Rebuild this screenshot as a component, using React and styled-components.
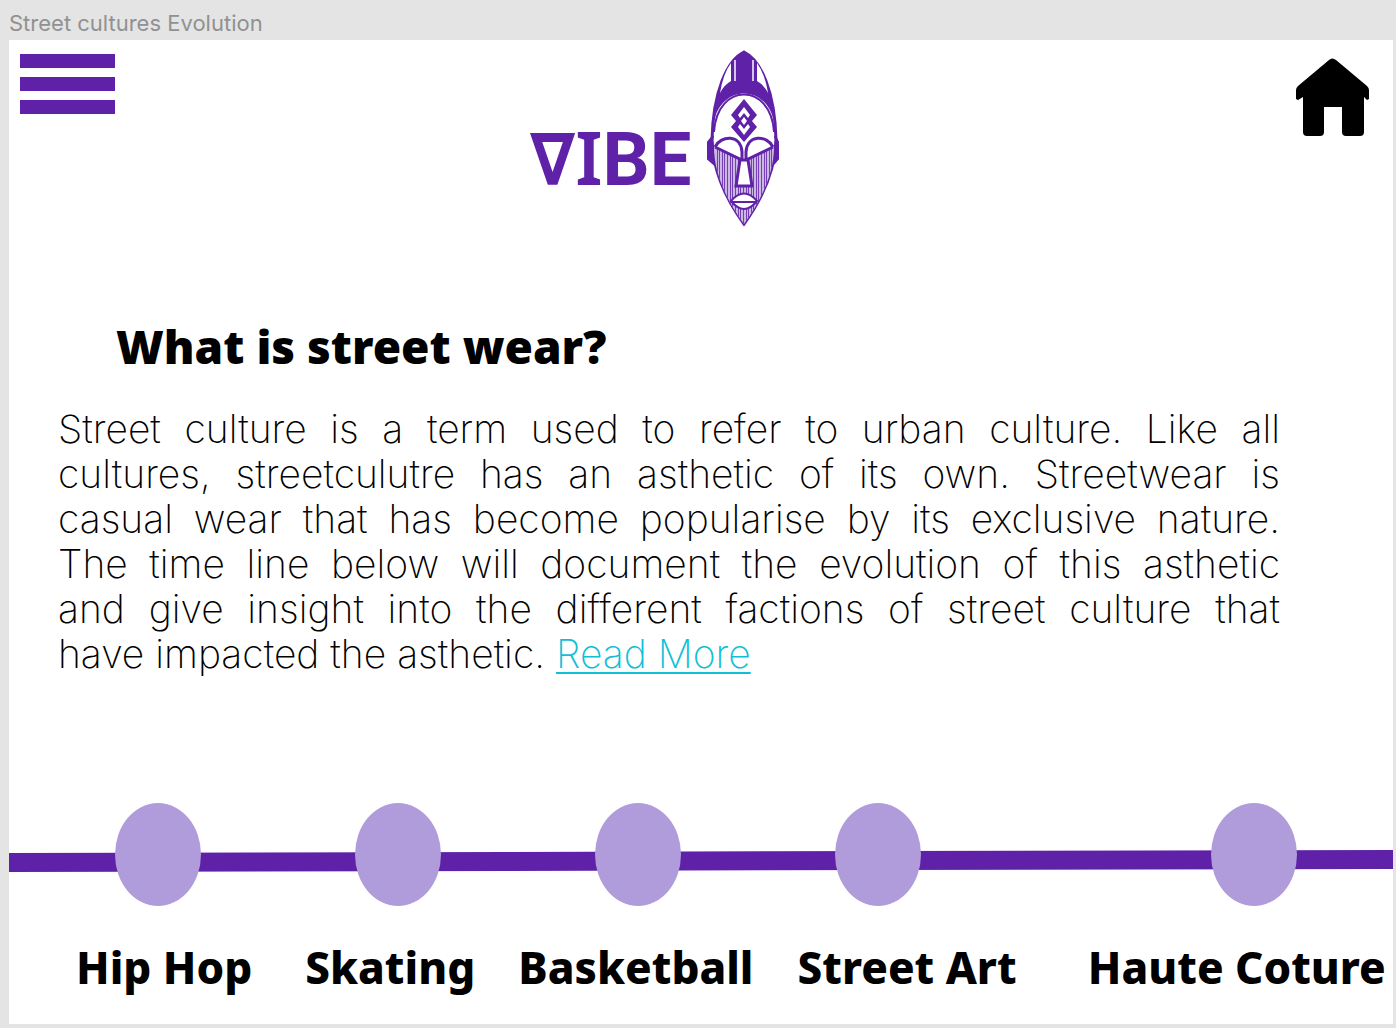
import React from "react";
import styled, { createGlobalStyle } from "styled-components";

const purple = "#5f21a8";
const lilac = "#b09cda";

const GlobalStyle = createGlobalStyle`
  *, *::before, *::after { box-sizing: border-box; }
  body { margin: 0; background: #e4e4e4; color: #000; font-family: Inter, "Liberation Sans", sans-serif; }
  button { appearance: none; border: 0; padding: 0; background: none; cursor: pointer; }
  svg { display: block; }
`;

const Canvas = styled.div`
  min-height: 100vh;
  padding: 0 3px 4px 9px;
  display: flex;
  flex-direction: column;
`;

const FrameName = styled.div`
  height: 40px;
  padding-top: 9px;
  font-size: 22px;
  line-height: 28px;
  color: #919191;
`;

const Artboard = styled.main`
  flex: 1;
  display: flex;
  flex-direction: column;
  background: #fff;
`;

const Header = styled.header`
  display: grid;
  grid-template-columns: 1fr auto 1fr;
  align-items: start;
  padding: 8px 24px 0 11px;
`;

const MenuButton = styled.button`
  display: flex;
  flex-direction: column;
  gap: 9px;
  width: 95px;
  margin-top: 6px;
`;

const MenuBar = styled.span`
  height: 14px;
  background: ${purple};
`;

const Logo = styled.a`
  display: flex;
  align-items: flex-start;
  margin-right: 78px;
  color: ${purple};
  text-decoration: none;
`;

const Wordmark = styled.span`
  display: flex;
  align-items: baseline;
  width: 176px;
  margin-top: 59px;
  font: 700 74px/100px Roboto, sans-serif;
`;

const Delta = styled.span`
  font: 700 72px/100px "DejaVu Sans Condensed", "DejaVu Sans", sans-serif;
`;

const SlabLetter = styled.span`
  font: 600 74px/100px "Noto Sans", sans-serif;
`;

const HomeLink = styled.a`
  justify-self: end;
  margin-top: 10px;
  color: #000;
`;

const Intro = styled.section`
  padding: 88px 113px 0 49px;
`;

const Title = styled.h1`
  margin: 0 0 30px 58px;
  font: 900 46px/60px "Noto Sans", sans-serif;
`;

const Copy = styled.p`
  margin: 0;
  font-size: 39px;
  font-weight: 200;
  line-height: 45px;
`;

const Line = styled.span`
  display: block;
  text-align: justify;
  text-align-last: ${(p) => (p.$last ? "left" : "justify")};
`;

const ReadMore = styled.a`
  color: #10bfd6;
  text-decoration-thickness: 2px;
  text-underline-offset: 4px;
`;

const Timeline = styled.nav`
  margin-top: 127px;
`;

const Track = styled.div`
  position: relative;
  display: flex;
  gap: 154px;
  padding: 0 96px 0 106px;
`;

const TrackLine = styled.svg`
  position: absolute;
  left: 0;
  top: 47px;
  width: 100%;
  height: 22px;
`;

const Stop = styled.button`
  position: relative;
  width: 86px;
  height: 103px;
  border-radius: 50%;
  background: ${lilac};
  &:last-child { margin-left: auto; }
`;

const Labels = styled.div`
  display: grid;
  grid-template-columns: 229fr 213fr 279fr 290fr 305fr;
  padding: 31px 0 27px 67px;
`;

const Label = styled.a`
  font: 800 44px/60px "Noto Sans", sans-serif;
  color: #000;
  text-decoration: none;
  white-space: nowrap;
`;

const stops = ["Hip Hop", "Skating", "Basketball", "Street Art", "Haute Coture"];
const hatch = [717, 719, 722, 724, 727, 730, 732, 735, 738, 740, 743, 746, 748, 751, 753, 756, 758, 761, 764, 766, 769, 771];

const lines = [
  "Street culture is a term used to refer to urban culture. Like all",
  "cultures, streetculutre has an asthetic of its own. Streetwear is",
  "casual wear that has become popularise by its exclusive nature.",
  "The time line below will document the evolution of this asthetic",
  "and give insight into the different factions of street culture that",
];

function Mask() {
  return (
    <svg width="75" height="180" viewBox="706 48 75 180" fill="none" stroke={purple} strokeWidth="2" aria-hidden="true">
      <defs>
        <clipPath id="cheeks">
          <path d="M714 147 L741 160 H747 L774 147 C774 175 760 202 744 224 C728 202 714 175 714 147Z" />
        </clipPath>
      </defs>
      <path d="M744 52 C727 60 713 92 712 140 C713 174 728 202 744 224 C760 202 775 174 776 140 C775 92 761 60 744 52Z" fill="#fff" strokeWidth="3" />
      <path d="M744 51 C731 58 721 78 717 100 L714 122 C721 84 767 84 774 122 L771 100 C767 78 757 58 744 51Z" fill={purple} stroke="none" />
      <path d="M731 63 V81 Q724 85 720 93 Q723 74 731 63ZM757 63 V81 Q764 85 768 93 Q765 74 757 63Z" fill="#fff" stroke="none" />
      <path d="M735 60V81M753 60V81" stroke="#d5c4e8" strokeWidth="2" />
      <path d="M714 132 C717 82 771 82 774 132" />
      <path d="M744 99 L757 115 752 121 757 127 744 142 731 127 736 121 731 115Z" fill={purple} stroke="none" />
      <path d="M744 107 L750 115 748 118 744 113 740 118 738 115ZM744 135 L750 127 748 124 744 129 740 124 738 127ZM744 117 L747 121 744 125 741 121Z" fill="#fff" stroke="none" />
      <path d="M713 136 L708 142 V159 L716 166 L712 140ZM775 136 L778 142 V159 L772 166 L776 140Z" fill={purple} strokeWidth="2" />
      <g clipPath="url(#cheeks)" strokeWidth="1">
        <path d="M712 145H776V226H712Z" fill="#cbb8e2" stroke="none" />
        {hatch.map((x) => <path key={x} d={`M${x + 0.5} 145V226`} strokeOpacity="0.8" />)}
      </g>
      <path d="M715 147 C721 135 741 134 742 152 V160 L715 147M773 147 C767 135 747 134 746 152 V160 L773 147" fill="#fff" strokeWidth="3" />
      <path d="M740 160 L736 186 H752 L748 160Z" fill="#fff" strokeWidth="3" />
      <path d="M731 201 Q744 186 757 201 Q744 217 731 201Z" fill="#fff" strokeWidth="2" />
      <path d="M731 202H757" />
    </svg>
  );
}

function HomeIcon() {
  return (
    <svg width="73" height="78" viewBox="0 0 73 78" fill="currentColor" aria-hidden="true">
      <path d="M33 2 Q36 -1 40 2 L71 28 Q73 30 73 32 V41 L71 42 68 39 V74 Q68 78 64 78 H50 Q46 78 46 74 V49 H28 V74 Q28 78 24 78 H11 Q7 78 7 74 V39 L2 42 0 41 V32 Q0 30 2 28Z" />
    </svg>
  );
}

export default function App() {
  return (
    <>
      <GlobalStyle />
      <Canvas>
        <FrameName>Street cultures Evolution</FrameName>
        <Artboard>
          <Header>
            <MenuButton aria-label="Menu"><MenuBar /><MenuBar /><MenuBar /></MenuButton>
            <Logo href="#" aria-label="VIBE">
              <Wordmark><Delta>∇</Delta><SlabLetter>I</SlabLetter>BE</Wordmark>
              <Mask />
            </Logo>
            <HomeLink href="#" aria-label="Home"><HomeIcon /></HomeLink>
          </Header>
          <Intro>
            <Title>What is street wear?</Title>
            <Copy>
              {lines.map((line) => <Line key={line}>{line} </Line>)}
              <Line $last>have impacted the asthetic. <ReadMore href="#">Read More</ReadMore></Line>
            </Copy>
          </Intro>
          <Timeline aria-label="Timeline">
            <Track>
              <TrackLine viewBox="0 0 1384 22" preserveAspectRatio="none" aria-hidden="true">
                <path d="M0 3 L1384 0 V19 L0 22Z" fill={purple} />
              </TrackLine>
              {stops.map((name) => <Stop key={name} aria-label={name} />)}
            </Track>
            <Labels>
              {stops.map((name) => <Label key={name} href="#">{name}</Label>)}
            </Labels>
          </Timeline>
        </Artboard>
      </Canvas>
    </>
  );
}
